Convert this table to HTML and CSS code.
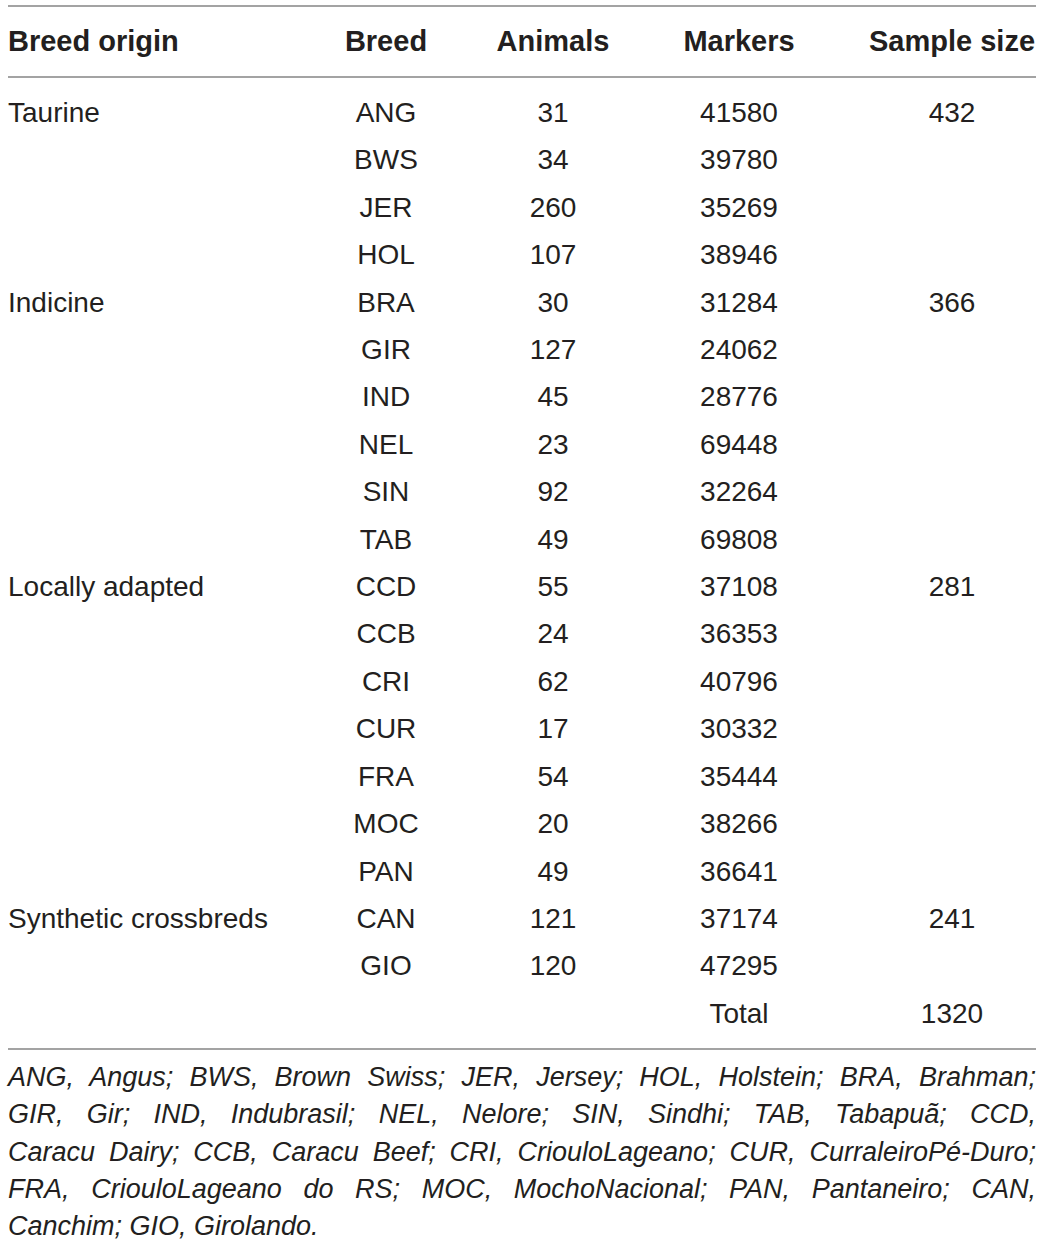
FILE: index.html
```html
<!DOCTYPE html>
<html lang="en">
<head>
    <meta charset="UTF-8">
    <meta name="viewport" content="width=device-width, initial-scale=1.0">
    <title>Breed samples</title>
    <link rel="stylesheet" href="styles.css">
</head>
<body>
    <div class="table-wrap">
        <table class="breed-table">
            <colgroup>
                <col class="col-origin">
                <col class="col-breed">
                <col class="col-animals">
                <col class="col-markers">
                <col class="col-sample">
            </colgroup>
            <thead>
                <tr>
                    <th class="origin">Breed origin</th>
                    <th>Breed</th>
                    <th>Animals</th>
                    <th>Markers</th>
                    <th class="sample">Sample size</th>
                </tr>
            </thead>
            <tbody>
                <tr><td class="origin">Taurine</td><td>ANG</td><td>31</td><td>41580</td><td class="sample">432</td></tr>
                <tr><td class="origin"></td><td>BWS</td><td>34</td><td>39780</td><td class="sample"></td></tr>
                <tr><td class="origin"></td><td>JER</td><td>260</td><td>35269</td><td class="sample"></td></tr>
                <tr><td class="origin"></td><td>HOL</td><td>107</td><td>38946</td><td class="sample"></td></tr>
                <tr><td class="origin">Indicine</td><td>BRA</td><td>30</td><td>31284</td><td class="sample">366</td></tr>
                <tr><td class="origin"></td><td>GIR</td><td>127</td><td>24062</td><td class="sample"></td></tr>
                <tr><td class="origin"></td><td>IND</td><td>45</td><td>28776</td><td class="sample"></td></tr>
                <tr><td class="origin"></td><td>NEL</td><td>23</td><td>69448</td><td class="sample"></td></tr>
                <tr><td class="origin"></td><td>SIN</td><td>92</td><td>32264</td><td class="sample"></td></tr>
                <tr><td class="origin"></td><td>TAB</td><td>49</td><td>69808</td><td class="sample"></td></tr>
                <tr><td class="origin">Locally adapted</td><td>CCD</td><td>55</td><td>37108</td><td class="sample">281</td></tr>
                <tr><td class="origin"></td><td>CCB</td><td>24</td><td>36353</td><td class="sample"></td></tr>
                <tr><td class="origin"></td><td>CRI</td><td>62</td><td>40796</td><td class="sample"></td></tr>
                <tr><td class="origin"></td><td>CUR</td><td>17</td><td>30332</td><td class="sample"></td></tr>
                <tr><td class="origin"></td><td>FRA</td><td>54</td><td>35444</td><td class="sample"></td></tr>
                <tr><td class="origin"></td><td>MOC</td><td>20</td><td>38266</td><td class="sample"></td></tr>
                <tr><td class="origin"></td><td>PAN</td><td>49</td><td>36641</td><td class="sample"></td></tr>
                <tr><td class="origin">Synthetic crossbreds</td><td>CAN</td><td>121</td><td>37174</td><td class="sample">241</td></tr>
                <tr><td class="origin"></td><td>GIO</td><td>120</td><td>47295</td><td class="sample"></td></tr>
                <tr><td class="origin"></td><td></td><td></td><td>Total</td><td class="sample">1320</td></tr>
            </tbody>
        </table>

        <p class="table-note">
            <span class="note-line">ANG, Angus; BWS, Brown Swiss; JER, Jersey; HOL, Holstein; BRA, Brahman;</span>
            <span class="note-line">GIR, Gir; IND, Indubrasil; NEL, Nelore; SIN, Sindhi; TAB, Tabapuã; CCD,</span>
            <span class="note-line">Caracu Dairy; CCB, Caracu Beef; CRI, CriouloLageano; CUR, CurraleiroPé-Duro;</span>
            <span class="note-line">FRA, CriouloLageano do RS; MOC, MochoNacional; PAN, Pantaneiro; CAN,</span>
            <span class="note-line last">Canchim; GIO, Girolando.</span>
        </p>
    </div>
</body>
</html>
```

FILE: styles.css
```css
:root {
    --ink: #231f20;
    --rule: #a3a3a3;
}

body {
    font-family: 'Liberation Sans', Arial, sans-serif;
    color: var(--ink);
    background: #ffffff;
    margin: 0;
    padding: 5px 6px 0 8px;
}

.table-wrap {
    width: 1028px;
}

.breed-table {
    width: 100%;
    border-collapse: collapse;
    table-layout: fixed;
    border-top: 2px solid var(--rule);
    border-bottom: 2px solid var(--rule);
    font-size: 28px;
}

.col-origin { width: 292px; }
.col-breed { width: 172px; }
.col-animals { width: 162px; }
.col-markers { width: 210px; }
.col-sample { width: 192px; }

.breed-table th,
.breed-table td {
    padding: 0;
    text-align: center;
    white-space: nowrap;
}

.breed-table .origin {
    text-align: left;
}

.breed-table .sample {
    padding-left: 24px;
}

.breed-table thead th {
    font-size: 29px;
    font-weight: bold;
    height: 69px;
    line-height: 69px;
    border-bottom: 2px solid var(--rule);
}

.breed-table tbody td {
    height: 47.4px;
    line-height: 47.4px;
}

.breed-table tbody tr:first-child td {
    padding-top: 11px;
}

.breed-table tbody tr:last-child td {
    padding-bottom: 11px;
}

.table-note {
    margin: 9px 0 0;
    font-size: 27px;
    font-style: italic;
    line-height: 37.3px;
}

/* each line is pinned to the reference wrap, then justified */
.note-line {
    display: block;
    text-align: justify;
    text-align-last: justify;
    white-space: nowrap;
}

.note-line.last {
    text-align-last: left;
}
```
